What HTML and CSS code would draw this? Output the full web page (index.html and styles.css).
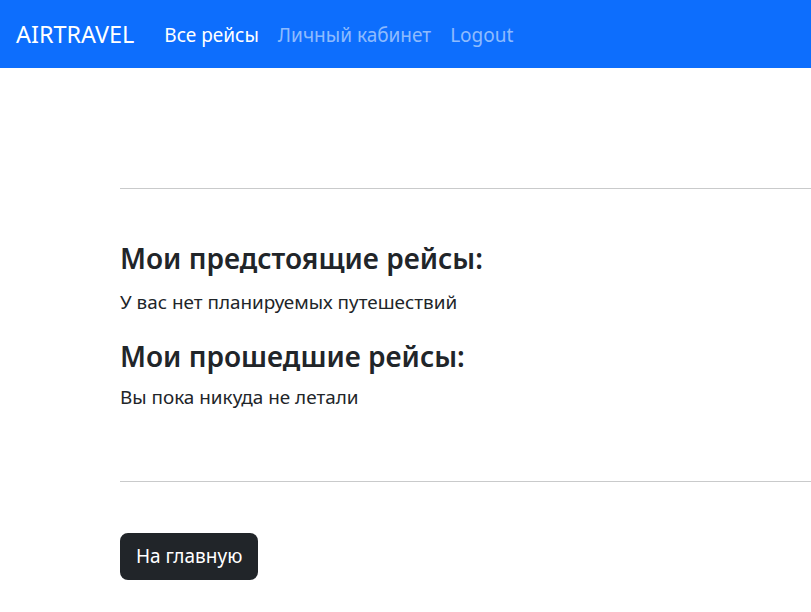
FILE: index.html
```html
<!DOCTYPE html>
<html lang="ru">
<head>
<meta charset="utf-8">
<title>AIRTRAVEL</title>
<link rel="stylesheet" href="styles.css">
</head>
<body>
<nav class="navbar">
  <a class="brand" href="#">AIRTRAVEL</a>
  <ul class="nav">
    <li><a class="nav-link active" href="#">Все рейсы</a></li>
    <li><a class="nav-link" href="#">Личный кабинет</a></li>
    <li><a class="nav-link" href="#">Logout</a></li>
  </ul>
</nav>
<main class="content">
  <hr class="rule rule-top">
  <section class="trips">
    <h3 class="trips-title">Мои предстоящие рейсы:</h3>
    <p class="trips-text">У вас нет планируемых путешествий</p>
    <h3 class="trips-title second">Мои прошедшие рейсы:</h3>
    <p class="trips-text">Вы пока никуда не летали</p>
  </section>
  <hr class="rule rule-bottom">
  <a class="btn-home" href="#">На главную</a>
</main>
</body>
</html>
```

FILE: styles.css
```css
* { box-sizing: border-box; }
html, body { margin: 0; padding: 0; }
body {
  font-family: "Noto Sans", "Open Sans", sans-serif;
  color: #212529;
  background: #fff;
  overflow: hidden;
  width: 811px;
  height: 612px;
}
.navbar {
  height: 68px;
  background: #0d6efd;
  display: flex;
  align-items: center;
  padding: 1px 16px 0;
}
.brand {
  color: #fff;
  text-decoration: none;
  font-size: 23.4px;
  line-height: 1;
  margin-right: 30px;
}
.nav {
  display: flex;
  list-style: none;
  margin: 0;
  padding: 0;
  gap: 19px;
}
.nav-link {
  font-size: 19px;
  color: rgba(255,255,255,0.55);
  text-decoration: none;
}
.nav-link.active { color: #fff; }
.content {
  padding-left: 120px;
  width: 811px;
  overflow: hidden;
}
.rule {
  border: 0;
  border-top: 1px solid #c9cacb;
  margin: 0 -120px 0 0;
}
.rule-top { margin-top: 120px; }
.trips { padding-top: 53px; }
.trips-title {
  font-size: 28px;
  font-weight: 600;
  line-height: 1.2;
  margin: 0 0 11px;
}
.trips-title.second { margin-top: 23px; margin-bottom: 9px; }
.trips-text {
  font-size: 18.9px;
  line-height: 30px;
  margin: 0;
}
.rule-bottom { margin-top: 69px; }
.btn-home {
  display: inline-block;
  margin-top: 51px;
  background: #212529;
  color: #fff;
  text-decoration: none;
  font-size: 19px;
  line-height: 27px;
  padding: 10px 16px;
  border-radius: 8px;
}
```
